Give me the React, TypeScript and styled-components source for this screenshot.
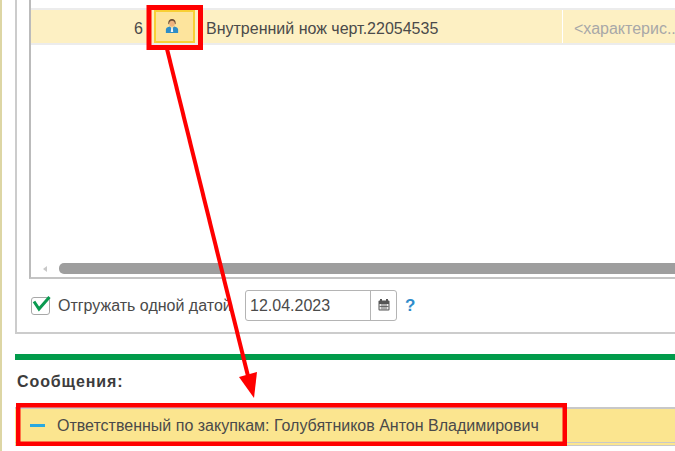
import React from 'react';
import styled, { createGlobalStyle } from 'styled-components';

const GlobalStyle = createGlobalStyle`
  html, body {
    margin: 0;
    padding: 0;
    background: #fff;
    overflow: hidden;
  }
  body {
    font-family: "Liberation Sans", Arial, sans-serif;
  }
`;

const Page = styled.div`
  width: 675px;
  height: 451px;
  position: relative;
  overflow: hidden;
  display: flex;
  background: #fff;
`;

const LeftStrip = styled.div`
  width: 2px;
  flex: none;
  background: #ddd6a4;
`;

const Main = styled.div`
  flex: 1;
  min-width: 0;
  padding-left: 13px;
  display: flex;
  flex-direction: column;
`;

const Panel = styled.div`
  height: 334px;
  flex: none;
  border-left: 2px solid #cccccc;
  border-bottom: 2px solid #cccccc;
  padding-left: 12px;
  display: flex;
  flex-direction: column;
  box-sizing: border-box;
`;

const Table = styled.div`
  height: 279px;
  flex: none;
  border-left: 2px solid #bbbbbb;
  border-bottom: 2px solid #c4c4c4;
  box-sizing: border-box;
  padding-top: 8px;
  display: flex;
  flex-direction: column;
`;

const Row = styled.div`
  height: 37px;
  flex: none;
  display: flex;
  background: #fdf0c3;
  border-top: 2px solid #ececec;
  border-bottom: 2px solid #ececec;
  box-sizing: border-box;
  font-size: 16px;
  color: #4a4a4a;
`;

const NumCell = styled.div`
  width: 112px;
  flex: none;
  text-align: right;
  line-height: 37px;
`;

const IconCell = styled.div`
  width: 41px;
  height: 33px;
  flex: none;
  margin-left: 11px;
  padding: 0 6px 3px 0;
  box-sizing: border-box;
  background: #fde49d;
  border: 2px solid #f8cf35;
  display: flex;
  align-items: center;
  justify-content: center;
`;

const NameCell = styled.div`
  width: 368px;
  flex: none;
  padding-left: 11px;
  box-sizing: border-box;
  line-height: 37px;
  border-right: 1px solid #fff;
`;

const PlaceholderCell = styled.div`
  flex: 1;
  padding-left: 11px;
  line-height: 37px;
  color: #a8a8a8;
  white-space: nowrap;
  overflow: hidden;
`;

const TableBody = styled.div`
  flex: 1;
`;

const ScrollRow = styled.div`
  height: 11px;
  flex: none;
  margin-bottom: 3px;
  display: flex;
  align-items: center;
  padding-left: 12px;
  gap: 12px;
`;

const ScrollArrow = styled.div`
  width: 0;
  height: 0;
  border-top: 3px solid transparent;
  border-bottom: 3px solid transparent;
  border-right: 4px solid #c8c8c8;
`;

const ScrollThumb = styled.div`
  flex: 1;
  height: 11px;
  background: #9e9e9e;
  border-radius: 5px 0 0 5px;
`;

const DateRow = styled.div`
  flex: 1;
  display: flex;
  align-items: center;
  font-size: 16px;
  color: #4a4a4a;
`;

const Check = styled.div`
  width: 19px;
  height: 18px;
  box-sizing: border-box;
  border: 1px solid #a8a8a8;
  border-radius: 3px;
  background: #fff;
  position: relative;
  flex: none;
  margin-left: 2px;
`;

const CheckMark = styled.svg`
  position: absolute;
  left: 0;
  top: -3px;
`;

const CheckLabel = styled.span`
  margin-left: 8px;
  width: 187px;
  flex: none;
  white-space: nowrap;
`;

const DateField = styled.div`
  width: 152px;
  height: 31px;
  flex: none;
  display: flex;
  box-sizing: border-box;
  border: 1px solid #b4b4b4;
  border-radius: 3px;
  background: #fff;
`;

const DateValue = styled.div`
  flex: 1;
  padding-left: 4px;
  line-height: 29px;
`;

const DateButton = styled.div`
  width: 26px;
  flex: none;
  border-left: 1px solid #b4b4b4;
  display: flex;
  align-items: center;
  justify-content: center;
  padding-bottom: 2px;
  box-sizing: border-box;
`;

const Help = styled.span`
  margin-left: 8px;
  color: #2f8ccb;
  font-weight: 700;
  font-size: 17px;
`;

const GreenBar = styled.div`
  height: 6px;
  flex: none;
  margin-top: 20px;
  background: #019b4b;
`;

const Title = styled.div`
  margin: 13px 0 0 2px;
  height: 18px;
  font-size: 16px;
  line-height: 18px;
  font-weight: 700;
  letter-spacing: 0.9px;
  color: #3c3c3c;
`;

const Message = styled.div`
  margin-top: 16px;
  height: 39px;
  flex: none;
  box-sizing: border-box;
  background: #fbe58f;
  border-top: 2px solid #c8c8c8;
  border-bottom: 4px double #c8c8c8;
  display: flex;
  align-items: center;
  font-size: 16px;
  color: #4a4a4a;
`;

const Dash = styled.div`
  width: 15px;
  height: 3px;
  flex: none;
  margin-left: 15px;
  background: #29a9e0;
`;

const MessageText = styled.span`
  margin-left: 12px;
  padding-top: 1px;
  white-space: nowrap;
`;

const Annotation = styled.svg`
  position: absolute;
  left: 0;
  top: 0;
  pointer-events: none;
`;

const PersonIcon = () => (
  <svg width="14" height="17" viewBox="0 0 16 17">
    <path d="M1 17v-4c0-2 2-3 4.500-3.500L8 12l2.500-2.500c2.500.5 4.500 1.500 4.500 3.500v4z" fill="#2f8dc6" />
    <path d="M7.200 11h1.600l.6 5H6.600z" fill="#f4f4f4" />
    <ellipse cx="8" cy="6" rx="3.300" ry="4" fill="#eeb27e" />
    <path d="M3.800 7c-.6-4 1.700-6 4.200-6s4.800 2 4.200 6l-.8-.2C11 4 9.800 3 8 3S5 4 4.600 6.800z" fill="#6e5038" />
  </svg>
);

const CalendarIcon = () => (
  <svg width="12" height="12" viewBox="0 0 12 12">
    <rect x="0.500" y="1.500" width="11" height="10" rx="1" fill="#555" />
    <rect x="2" y="0" width="2" height="3" fill="#555" />
    <rect x="8" y="0" width="2" height="3" fill="#555" />
    <rect x="1.500" y="5" width="9" height="5.500" fill="#e8e8e8" />
    <path d="M4 5v5.500M6 5v5.500M8 5v5.500M1.500 7.500h9" stroke="#555" strokeWidth="0.800" />
  </svg>
);

export default function App() {
  return (
    <Page>
      <GlobalStyle />
      <LeftStrip />
      <Main>
        <Panel>
          <Table>
            <Row>
              <NumCell>6</NumCell>
              <IconCell>
                <PersonIcon />
              </IconCell>
              <NameCell>Внутренний нож черт.22054535</NameCell>
              <PlaceholderCell>&lt;характерис...</PlaceholderCell>
            </Row>
            <TableBody />
            <ScrollRow>
              <ScrollArrow />
              <ScrollThumb />
            </ScrollRow>
          </Table>
          <DateRow>
            <Check>
              <CheckMark width="20" height="20" viewBox="0 0 20 20">
                <path d="M2 6.500L7 14L17.500 2" fill="none" stroke="#0a9a50" strokeWidth="3" />
              </CheckMark>
            </Check>
            <CheckLabel>Отгружать одной датой</CheckLabel>
            <DateField>
              <DateValue>12.04.2023</DateValue>
              <DateButton>
                <CalendarIcon />
              </DateButton>
            </DateField>
            <Help>?</Help>
          </DateRow>
        </Panel>
        <GreenBar />
        <Title>Сообщения:</Title>
        <Message>
          <Dash />
          <MessageText>Ответственный по закупкам: Голубятников Антон Владимирович</MessageText>
        </Message>
      </Main>
      <Annotation width="675" height="451" viewBox="0 0 675 451">
        <rect x="149" y="7.500" width="51.500" height="40" fill="none" stroke="#f00" strokeWidth="5" />
        <rect x="18.250" y="405.250" width="546.500" height="38.500" fill="none" stroke="#f00" strokeWidth="4.500" />
        <path d="M167 49L248 376" stroke="#f00" strokeWidth="4" />
        <path d="M239 377L257 372L254 398z" fill="#f00" />
      </Annotation>
    </Page>
  );
}
